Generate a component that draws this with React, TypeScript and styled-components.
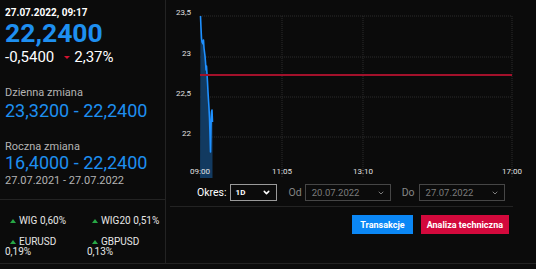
import styled, { createGlobalStyle } from 'styled-components';
import { ChevronDown } from 'lucide-react';

const BLUE = '#1e8ff0';
const BORDER = '#232323';

const GlobalStyle = createGlobalStyle`
  html, body {
    margin: 0;
    padding: 0;
    background: #0b0b0b;
  }
  body {
    font-family: Roboto, 'Liberation Sans', sans-serif;
    color: #fff;
  }
`;

const Page = styled.div`
  display: flex;
  width: 536px;
  height: 263px;
  border-bottom: 1px solid ${BORDER};
  background: #0b0b0b;
`;

const Side = styled.aside`
  width: 165px;
  display: flex;
  flex-direction: column;
  border-right: 1px solid ${BORDER};
`;

const Summary = styled.section`
  height: 200px;
  box-sizing: border-box;
  padding: 7px 0 0 5px;
  border-bottom: 1px solid ${BORDER};
`;

const Stamp = styled.div`
  font-size: 10px;
  line-height: 12px;
  font-weight: 700;
`;

const Price = styled.div`
  font-size: 26.5px;
  line-height: 26px;
  font-weight: 700;
  color: ${BLUE};
  margin-top: 1px;
`;

const Change = styled.div`
  display: flex;
  align-items: center;
  font-size: 15px;
  line-height: 18px;
  margin-top: 2px;
`;

const DownMark = styled.span`
  display: inline-block;
  width: 0;
  height: 0;
  border-left: 3px solid transparent;
  border-right: 3px solid transparent;
  border-top: 3px solid #d3122f;
  margin: 0 4px 0 10px;
`;

const Label = styled.div<{ $gap: number }>`
  font-size: 11px;
  line-height: 13px;
  color: #b4b4b4;
  margin-top: ${(p) => p.$gap}px;
`;

const Range = styled.div<{ $gap: number }>`
  font-size: 18px;
  line-height: 20px;
  color: ${BLUE};
  margin-top: ${(p) => p.$gap}px;
`;

const Indices = styled.section`
  display: grid;
  grid-template-columns: 82px 82px;
  row-gap: 11px;
  padding: 16px 0 0 5px;
`;

const Index = styled.div`
  font-size: 10px;
  line-height: 10px;
  color: #e6e6e6;
`;

const UpMark = styled.span`
  display: inline-block;
  width: 0;
  height: 0;
  border-left: 3px solid transparent;
  border-right: 3px solid transparent;
  border-bottom: 4px solid #27a745;
  margin: 0 3px 1px 5px;
`;

const Main = styled.main`
  flex: 1;
  display: flex;
  flex-direction: column;
`;

const Controls = styled.div`
  display: flex;
  align-items: center;
  height: 17px;
  margin-top: 4px;
  padding-left: 31px;
`;

const CtrlLabel = styled.span<{ $dim?: boolean; $left: number; $right: number }>`
  font-size: 10.5px;
  color: ${(p) => (p.$dim ? '#858585' : '#ffffff')};
  margin: 0 ${(p) => p.$right}px 0 ${(p) => p.$left}px;
`;

const Select = styled.div<{ $w: number; $dim?: boolean }>`
  width: ${(p) => p.$w}px;
  height: 17px;
  box-sizing: border-box;
  border: 1px solid ${(p) => (p.$dim ? '#464646' : '#9a9a9a')};
  display: flex;
  align-items: center;
  justify-content: space-between;
  padding: 0 5px 0 ${(p) => (p.$dim ? 6 : 5)}px;
  font-size: ${(p) => (p.$dim ? 9.5 : 8)}px;
  font-weight: ${(p) => (p.$dim ? 400 : 700)};
  color: ${(p) => (p.$dim ? '#7c7c7c' : '#fff')};
`;

const Footer = styled.div`
  margin: 5px 23px 0 4px;
  border-top: 1px solid ${BORDER};
  padding: 8px 4px 0 0;
  display: flex;
  justify-content: flex-end;
  gap: 8px;
`;

const Button = styled.button<{ $tone: 'blue' | 'red' }>`
  height: 19px;
  border: none;
  padding: 0 ${(p) => (p.$tone === 'blue' ? 8 : 6)}px;
  font-family: Roboto, 'Liberation Sans', sans-serif;
  font-size: 9px;
  font-weight: 700;
  color: #fff;
  background: ${(p) => (p.$tone === 'blue' ? '#0b87f5' : '#d3093c')};
`;

const indices = [
  { name: 'WIG', value: '0,60%', wrap: false },
  { name: 'WIG20', value: '0,51%', wrap: false },
  { name: 'EURUSD', value: '0,19%', wrap: true },
  { name: 'GBPUSD', value: '0,13%', wrap: true },
];

const yTicks = [
  { label: '23,5', y: 16 },
  { label: '23', y: 57 },
  { label: '22,5', y: 97 },
  { label: '22', y: 137 },
];

const xTicks = [
  { label: '09:00', x: 200 },
  { label: '11:05', x: 282 },
  { label: '13:10', x: 363 },
  { label: '17:00', x: 512 },
];

const line: [number, number][] = [
  [200.5, 16], [201, 28], [201.5, 38], [202, 42], [203, 44], [203.5, 40],
  [204, 48], [205, 56], [205.5, 62], [206, 70], [206.5, 66], [207, 74],
  [207.5, 82], [208, 92], [208.5, 100], [209, 108], [209.5, 118],
  [210, 134], [210.5, 152], [211, 126], [211.5, 112], [212, 110], [212.5, 122],
];

function Chart() {
  const pts = line.map(([x, y]) => `${x},${y}`).join(' ');
  const area = `200,178 ${pts} 212.5,178`;
  return (
    <svg width="370" height="180" viewBox="166 0 370 180">
      {yTicks.map((t) => (
        <g key={t.label}>
          <line x1="200" x2="512" y1={t.y} y2={t.y} stroke="#2c2c2c" strokeDasharray="1 1" />
          <text x="191" y={t.y - 1} textAnchor="end" fontSize="8" fill="#e0e0e0">
            {t.label}
          </text>
        </g>
      ))}
      {xTicks.slice(1).map((t) => (
        <line key={t.label} x1={t.x} x2={t.x} y1="16" y2="177" stroke="#2c2c2c" strokeDasharray="1 1" />
      ))}
      <polygon points={area} fill="#123a60" />
      <polyline points={pts} fill="none" stroke="#1e90ff" strokeWidth="1.6" strokeLinejoin="round" />
      <line x1="200" x2="512" y1="75" y2="75" stroke="#a3112b" strokeWidth="2" />
      {xTicks.map((t) => (
        <text key={t.label} x={t.x} y="174" textAnchor="middle" fontSize="8" fill="#e0e0e0">
          {t.label}
        </text>
      ))}
    </svg>
  );
}

export default function App() {
  return (
    <>
      <GlobalStyle />
      <Page>
        <Side>
          <Summary>
            <Stamp>27.07.2022, 09:17</Stamp>
            <Price>22,2400</Price>
            <Change>
              -0,5400
              <DownMark />
              2,37%
            </Change>
            <Label $gap={20}>Dzienna zmiana</Label>
            <Range $gap={2}>23,3200 - 22,2400</Range>
            <Label $gap={19}>Roczna zmiana</Label>
            <Range $gap={0}>16,4000 - 22,2400</Range>
            <Label $gap={1}>27.07.2021 - 27.07.2022</Label>
          </Summary>
          <Indices>
            {indices.map((i) => (
              <Index key={i.name}>
                <UpMark />
                {i.name}
                {i.wrap ? <br /> : ' '}
                {i.value}
              </Index>
            ))}
          </Indices>
        </Side>
        <Main>
          <Chart />
          <Controls>
            <CtrlLabel $left={0} $right={3}>Okres:</CtrlLabel>
            <Select $w={47}>
              1D
              <ChevronDown size={9} strokeWidth={4} />
            </Select>
            <CtrlLabel $dim $left={12} $right={3}>Od</CtrlLabel>
            <Select $w={86} $dim>
              20.07.2022
              <ChevronDown size={8} strokeWidth={3} />
            </Select>
            <CtrlLabel $dim $left={11} $right={4}>Do</CtrlLabel>
            <Select $w={86} $dim>
              27.07.2022
              <ChevronDown size={8} strokeWidth={3} />
            </Select>
          </Controls>
          <Footer>
            <Button $tone="blue">Transakcje</Button>
            <Button $tone="red">Analiza techniczna</Button>
          </Footer>
        </Main>
      </Page>
    </>
  );
}
